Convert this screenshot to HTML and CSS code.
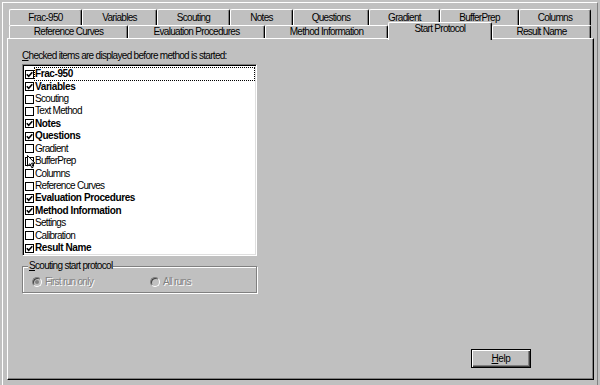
FILE: index.html
```html
<!DOCTYPE html>
<html lang="en">

<head>
    <meta charset="UTF-8">
    <meta name="viewport" content="width=device-width, initial-scale=1.0">
    <title>Start Protocol</title>
    <link rel="stylesheet" href="styles.css">
</head>

<body>
    <div class="frame">
        <div class="tabs">
            <div class="tabrow back">
                <div class="tab">Frac-950</div>
                <div class="tab">Variables</div>
                <div class="tab">Scouting</div>
                <div class="tab">Notes</div>
                <div class="tab">Questions</div>
                <div class="tab">Gradient</div>
                <div class="tab">BufferPrep</div>
                <div class="tab">Columns</div>
            </div>
            <div class="tabrow front">
                <div class="tab">Reference Curves</div>
                <div class="tab">Evaluation Procedures</div>
                <div class="tab">Method Information</div>
                <div class="tab active">Start Protocol</div>
                <div class="tab">Result Name</div>
            </div>
        </div>

        <div class="panel">
            <div class="caption"><u>C</u>hecked items are displayed before method is started:</div>

            <div class="list">
                <div class="item on"><span class="box"><svg viewBox="0 0 7 7"><polyline points="0.8,3.2 2.7,5.2 6.3,1.2"/></svg></span><span class="label focus">Frac-950</span></div>
                <div class="item on"><span class="box"><svg viewBox="0 0 7 7"><polyline points="0.8,3.2 2.7,5.2 6.3,1.2"/></svg></span><span class="label">Variables</span></div>
                <div class="item"><span class="box"></span><span class="label">Scouting</span></div>
                <div class="item"><span class="box"></span><span class="label">Text Method</span></div>
                <div class="item on"><span class="box"><svg viewBox="0 0 7 7"><polyline points="0.8,3.2 2.7,5.2 6.3,1.2"/></svg></span><span class="label">Notes</span></div>
                <div class="item on"><span class="box"><svg viewBox="0 0 7 7"><polyline points="0.8,3.2 2.7,5.2 6.3,1.2"/></svg></span><span class="label">Questions</span></div>
                <div class="item"><span class="box"></span><span class="label">Gradient</span></div>
                <div class="item"><span class="box"></span><span class="label">BufferPrep</span></div>
                <div class="item"><span class="box"></span><span class="label">Columns</span></div>
                <div class="item"><span class="box"></span><span class="label">Reference Curves</span></div>
                <div class="item on"><span class="box"><svg viewBox="0 0 7 7"><polyline points="0.8,3.2 2.7,5.2 6.3,1.2"/></svg></span><span class="label">Evaluation Procedures</span></div>
                <div class="item on"><span class="box"><svg viewBox="0 0 7 7"><polyline points="0.8,3.2 2.7,5.2 6.3,1.2"/></svg></span><span class="label">Method Information</span></div>
                <div class="item"><span class="box"></span><span class="label">Settings</span></div>
                <div class="item"><span class="box"></span><span class="label">Calibration</span></div>
                <div class="item on"><span class="box"><svg viewBox="0 0 7 7"><polyline points="0.8,3.2 2.7,5.2 6.3,1.2"/></svg></span><span class="label">Result Name</span></div>

                <!-- mouse pointer sitting over BufferPrep -->
                <svg class="pointer" width="9" height="14" viewBox="0 0 9 14">
                    <path d="M0.5 0.5 L0.5 11 L3 8.7 L4.8 12.8 L6.3 12.1 L4.6 8.2 L8 8.2 Z"/>
                </svg>
            </div>

            <fieldset class="group">
                <legend><u>S</u>couting start protocol</legend>
                <div class="radios">
                    <label class="radio first"><span class="dot on"></span><span class="dim">First run only</span></label>
                    <label class="radio"><span class="dot"></span><span class="dim">All runs</span></label>
                </div>
            </fieldset>

            <div class="buttons">
                <button class="btn"><u>H</u>elp</button>
            </div>
        </div>
    </div>
</body>

</html>
```

FILE: styles.css
```css
body {
    margin: 0;
    padding: 0;
    width: 600px;
    height: 385px;
    overflow: hidden;
    background-color: #c0c0c0;
    font-family: "Liberation Sans", Arial, sans-serif;
    font-size: 10px;
    letter-spacing: -0.7px;
    color: #000;
}

.frame {
    box-sizing: border-box;
    width: 596px;
    height: 383px;
    margin: 2px 0 0 2px;
    padding: 6px 3px 0 4px;
    border-top: 1px solid #fff;
    border-left: 1px solid #fff;
    border-right: 1px solid #808080;
}

/* tab strip: two rows, front row touches the panel */
.tabs {
    margin: 0 2px;
}

.tabrow {
    display: flex;
}

.tab {
    box-sizing: border-box;
    text-align: center;
    white-space: nowrap;
    background-color: #c0c0c0;
    border-top: 1px solid #fff;
    border-left: 1px solid #fff;
    border-right: 1px solid #000;
    box-shadow: inset -1px 0 #808080;
    border-radius: 2px 2px 0 0;
}

.back .tab {
    height: 16px;
    line-height: 15px;
}

.back .tab:nth-child(1) { width: 73px; }
.back .tab:nth-child(2) { width: 75px; }
.back .tab:nth-child(3) { width: 73px; }
.back .tab:nth-child(4) { width: 63px; }
.back .tab:nth-child(5) { width: 76px; }
.back .tab:nth-child(6) { width: 71px; }
.back .tab:nth-child(7) { width: 79px; }
.back .tab:nth-child(8) { width: 72px; }

.front {
    align-items: flex-end;
    margin-top: -3px;
    height: 16px;
}

.front .tab {
    height: 13px;
    line-height: 12px;
}

.front .tab:nth-child(1) { width: 119px; }
.front .tab:nth-child(2) { width: 137px; }
.front .tab:nth-child(3) { width: 123px; }
.front .tab:nth-child(4) { width: 104px; }
.front .tab:nth-child(5) { width: 99px; }

.front .tab.active {
    position: relative;
    z-index: 2;
    height: 18px;
    line-height: 12px;
    margin-bottom: -2px;
    padding-bottom: 4px;
}

.panel {
    box-sizing: border-box;
    position: relative;
    width: 587px;
    height: 342px;
    padding: 11px 14px 0 14px;
    border-top: 1px solid #fff;
    border-left: 1px solid #fff;
    border-right: 1px solid #000;
    border-bottom: 1px solid #000;
    box-shadow: inset -1px -1px #808080;
}

.caption {
    line-height: 12px;
    margin-bottom: 2px;
}

.list {
    box-sizing: border-box;
    position: relative;
    width: 235px;
    height: 192px;
    padding-top: 3px;
    background-color: #fff;
    border: 1px solid;
    border-color: #808080 #fff #fff #808080;
    box-shadow: inset 1px 1px #000, inset -1px -1px #dfdfdf;
}

.item {
    display: flex;
    align-items: center;
    height: 12.43px;
    padding-left: 2px;
}

.box {
    box-sizing: border-box;
    display: flex;
    align-items: center;
    justify-content: center;
    width: 9px;
    height: 9px;
    border: 1px solid #000;
    background-color: #fff;
}

.box svg {
    width: 7px;
    height: 7px;
    fill: none;
    stroke: #000;
    stroke-width: 1.6;
}

.label {
    flex: 1;
    line-height: 12px;
    border: 1px solid transparent;
    margin-right: 1px;
}

.item.on .label {
    font-weight: bold;
    letter-spacing: -0.4px;
}

.label.focus {
    border: 1px dotted #000;
}

.pointer {
    position: absolute;
    left: 4px;
    top: 90px;
    fill: #fff;
    stroke: #000;
    stroke-width: 1;
}

.group {
    box-sizing: border-box;
    width: 235px;
    margin: 4px 0 0 0;
    padding: 4px 0 4px 9px;
    min-width: 0;
    border: 1px solid #808080;
    box-shadow: inset 1px 1px #fff, 1px 1px #fff;
}

.group legend {
    margin-left: -4px;
    padding: 0 1px;
    line-height: 12px;
    background-color: #c0c0c0;
}

.radios {
    display: flex;
    line-height: 12px;
}

.radio {
    display: flex;
    align-items: center;
}

.radio.first {
    width: 118px;
}

.dot {
    box-sizing: border-box;
    position: relative;
    width: 10px;
    height: 10px;
    margin-right: 3px;
    border-radius: 50%;
    border: 1px solid;
    border-color: #808080 #fff #fff #808080;
    box-shadow: inset 1px 1px #404040;
    background-color: #c0c0c0;
}

.dot.on::after {
    content: "";
    position: absolute;
    left: 2px;
    top: 2px;
    width: 4px;
    height: 4px;
    border-radius: 50%;
    background-color: #808080;
}

.dim {
    color: #808080;
    text-shadow: 1px 1px #fff;
}

.buttons {
    display: flex;
    justify-content: flex-end;
    margin-top: 56px;
    padding-right: 48px;
}

.btn {
    box-sizing: border-box;
    width: 60px;
    height: 19px;
    padding: 0;
    font-family: inherit;
    font-size: 10px;
    letter-spacing: -0.4px;
    color: #000;
    background-color: #c0c0c0;
    border: 1px solid #000;
    box-shadow: inset 1px 1px #fff, inset -1px -1px #404040, inset -2px -2px #808080;
}
```
